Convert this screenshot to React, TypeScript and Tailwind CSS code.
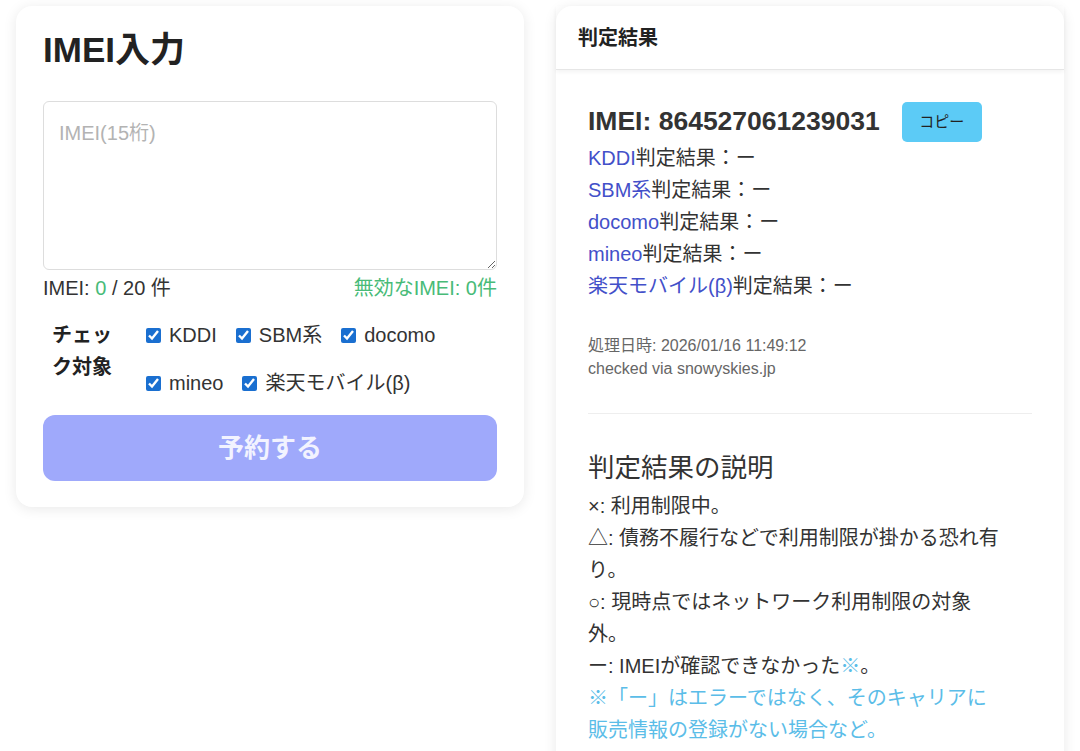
import React from "react";

const carriers = ["KDDI", "SBM系", "docomo", "mineo", "楽天モバイル(β)"];

const font = {
  fontFamily: '"Liberation Sans", "Noto Sans CJK JP", sans-serif',
};

const ImeiInputCard = () => {
  const [checked, setChecked] = React.useState<string[]>(carriers);
  const toggle = (name: string) => {
    setChecked((prev) =>
      prev.includes(name) ? prev.filter((c) => c !== name) : [...prev, name]
    );
  };

  return (
    <div className="w-[508px] shrink-0 min-w-0 self-start bg-white rounded-[16px] shadow-[0_2px_14px_rgba(0,0,0,0.09)] px-[27px] pt-[23px] pb-[26px]">
      <h1 className="text-[35px] leading-[42px] font-bold text-[#222]">
        IMEI入力
      </h1>
      <textarea
        placeholder="IMEI(15桁)"
        className="mt-[30px] block w-full min-w-0 h-[169px] border border-[#ddd] rounded-[6px] px-[15px] py-[16px] text-[20px] leading-[30px] text-[#333] placeholder:text-[#b3b3b3] outline-none resize-y"
      />
      <div className="mt-[2px] flex justify-between text-[20px] leading-[32px] text-[#333]">
        <span>
          IMEI: <span className="text-[#48bb78]">0</span> / 20 件
        </span>
        <span className="text-[#48bb78]">無効なIMEI: 0件</span>
      </div>
      <div className="mt-[15px] flex">
        <div className="w-[60px] ml-[9px] mr-[34px] text-[20px] leading-[32px] font-bold text-[#222] shrink-0">
          チェック対象
        </div>
        <div className="flex flex-wrap gap-x-[19px] gap-y-[16px] flex-1">
          {carriers.map((c) => (
            <label
              key={c}
              className="flex items-center gap-[8px] h-[32px] text-[20px] text-[#333]"
            >
              <input
                type="checkbox"
                checked={checked.includes(c)}
                onChange={() => toggle(c)}
                className="w-[15px] h-[15px] m-0 accent-[#1a6fd0]"
              />
              {c}
            </label>
          ))}
        </div>
      </div>
      <button
        type="button"
        disabled
        className="mt-[16px] w-full h-[66px] rounded-[12px] bg-[#9fa9fb] text-[#f2f3ff] text-[26px] font-bold"
      >
        予約する
      </button>
    </div>
  );
};

const results = ["KDDI", "SBM系", "docomo", "mineo", "楽天モバイル(β)"];

const ResultCard = () => {
  return (
    <div className="w-[508px] shrink-0 bg-white rounded-t-[16px] shadow-[0_2px_14px_rgba(0,0,0,0.09)]">
      <div className="h-[64px] pl-[22px] flex items-center border-b border-[#e6e6e6] shadow-[0_2px_4px_rgba(0,0,0,0.05)] text-[20px] font-bold text-[#222]">
        判定結果
      </div>
      <div className="px-[32px] pt-[32px] pb-[32px]">
        <div className="flex items-center h-[40px]">
          <span className="text-[26.5px] font-bold text-[#333]">
            IMEI: 864527061239031
          </span>
          <button
            type="button"
            className="ml-[22px] w-[80px] h-[40px] rounded-[5px] bg-[#5ccbf6] text-[15px] text-[#222]"
          >
            コピー
          </button>
        </div>
        <div className="text-[20px] leading-[32px] text-[#333]">
          {results.map((r) => (
            <div key={r}>
              <span className="text-[#4350c9]">{r}</span>判定結果：ー
            </div>
          ))}
        </div>
        <div className="mt-[32px] text-[16px] leading-[23px] text-[#666]">
          <div>処理日時: 2026/01/16 11:49:12</div>
          <div>checked via snowyskies.jp</div>
        </div>
        <hr className="mt-[33px] border-t border-[#eee]" />
        <h2 className="mt-[32px] text-[26.5px] leading-[44px] font-normal text-[#333]">
          判定結果の説明
        </h2>
        <div className="max-w-[416px] text-[20px] leading-[32px] text-[#333]">
          <p>×: 利用制限中。</p>
          <p>△: 債務不履行などで利用制限が掛かる恐れ有り。</p>
          <p>○: 現時点ではネットワーク利用制限の対象外。</p>
          <p>
            ー: IMEIが確認できなかった<span className="text-[#5bbde8]">※</span>。
          </p>
          <p className="text-[#5bbde8]">
            ※「ー」はエラーではなく、そのキャリアに販売情報の登録がない場合など。
          </p>
          <p className="text-[#5bbde8]">
            海外版の端末や製造番号が異なる場合も表示されます。
          </p>
        </div>
      </div>
    </div>
  );
};

export default function App() {
  return (
    <div style={font} className="h-screen overflow-hidden bg-white">
      <div className="flex gap-8 px-4 pt-[6px]">
        <ImeiInputCard />
        <ResultCard />
      </div>
    </div>
  );
}
